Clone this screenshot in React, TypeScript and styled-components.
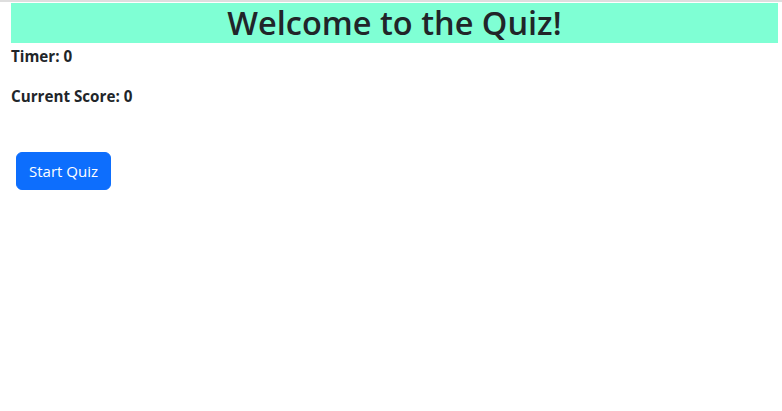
import React from "react";
import styled, { createGlobalStyle } from "styled-components";

const GlobalStyle = createGlobalStyle`
  html, body {
    margin: 0;
    padding: 0;
    background: #ffffff;
  }
  body {
    font-family: "Open Sans", "Noto Sans", sans-serif;
    color: #212529;
    font-size: 16px;
    line-height: 1.5;
  }
`;

const Page = styled.div`
  border-top: 2px solid #dedede;
  padding: 1px 4px 0 11px;
`;

const Banner = styled.h1`
  margin: 0;
  background: #7fffd4;
  text-align: center;
  font-size: 32.5px;
  font-weight: 600;
  line-height: 40px;
  color: #212529;
`;

const Stat = styled.p`
  margin: 0 0 16px;
  font-weight: 700;
  font-size: 15.2px;
  line-height: 24px;
  padding-top: 1px;
  height: 23px;
`;

const StartButton = styled.button`
  margin: 29px 0 0 5px;
  padding: 0 12px;
  height: 38px;
  border: 1px solid #0d6efd;
  border-radius: 6px;
  background: #0d6efd;
  color: #ffffff;
  font-family: inherit;
  font-size: 15px;
  line-height: 24px;
  cursor: pointer;
`;

export default function App() {
  return (
    <>
      <GlobalStyle />
      <Page>
        <Banner>Welcome to the Quiz!</Banner>
        <Stat>Timer: 0</Stat>
        <Stat>Current Score: 0</Stat>
        <StartButton>Start Quiz</StartButton>
      </Page>
    </>
  );
}
